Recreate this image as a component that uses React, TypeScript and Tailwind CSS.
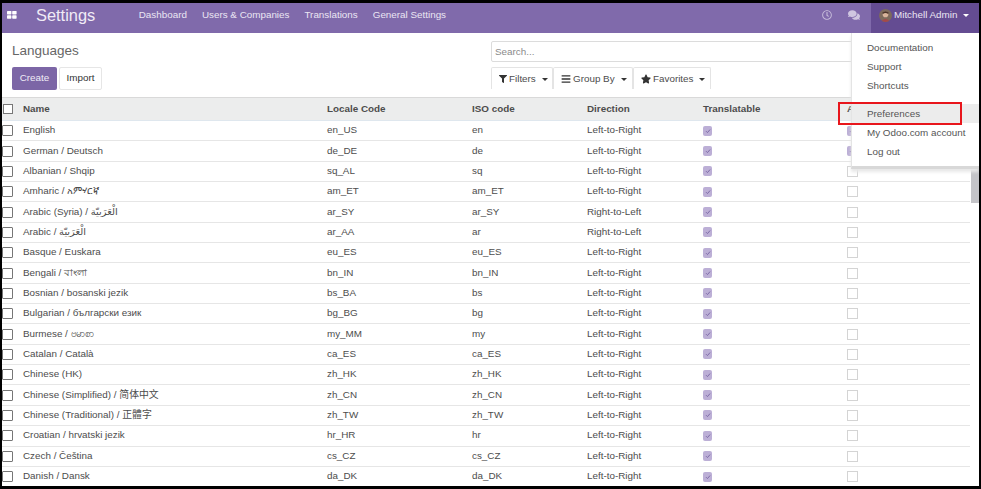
import { FaBars, FaComments, FaFilter, FaRegClock, FaStar } from "react-icons/fa";

const font = { fontFamily: '"Liberation Sans", "Noto Sans CJK SC", "DejaVu Sans", sans-serif' };

const rows: [string, string, string, string, boolean][] = [
  ["English", "en_US", "en", "Left-to-Right", true],
  ["German / Deutsch", "de_DE", "de", "Left-to-Right", true],
  ["Albanian / Shqip", "sq_AL", "sq", "Left-to-Right", false],
  ["Amharic / አምሃርኛ", "am_ET", "am_ET", "Left-to-Right", false],
  ["Arabic (Syria) / الْعَرَبيّة", "ar_SY", "ar_SY", "Right-to-Left", false],
  ["Arabic / الْعَرَبيّة", "ar_AA", "ar", "Right-to-Left", false],
  ["Basque / Euskara", "eu_ES", "eu_ES", "Left-to-Right", false],
  ["Bengali / বাংলা", "bn_IN", "bn_IN", "Left-to-Right", false],
  ["Bosnian / bosanski jezik", "bs_BA", "bs", "Left-to-Right", false],
  ["Bulgarian / български език", "bg_BG", "bg", "Left-to-Right", false],
  ["Burmese / ဗမာစာ", "my_MM", "my", "Left-to-Right", false],
  ["Catalan / Català", "ca_ES", "ca_ES", "Left-to-Right", false],
  ["Chinese (HK)", "zh_HK", "zh_HK", "Left-to-Right", false],
  ["Chinese (Simplified) / 简体中文", "zh_CN", "zh_CN", "Left-to-Right", false],
  ["Chinese (Traditional) / 正體字", "zh_TW", "zh_TW", "Left-to-Right", false],
  ["Croatian / hrvatski jezik", "hr_HR", "hr", "Left-to-Right", false],
  ["Czech / Čeština", "cs_CZ", "cs_CZ", "Left-to-Right", false],
  ["Danish / Dansk", "da_DK", "da_DK", "Left-to-Right", false],
];

const gridCols = "grid grid-cols-[21px_304px_145px_115px_116px_144px_1fr] items-center";

function Caret({ color = "border-t-[#4c4c4c]" }: { color?: string }) {
  return <span className={`inline-block w-0 h-0 border-x-[3px] border-x-transparent border-t-[3px] ${color}`} />;
}

function Check({ on }: { on: boolean }) {
  if (on) {
    return (
      <span className="w-[9px] h-[10px] rounded-[2px] bg-[#bcafd6] flex items-center justify-center">
        <svg viewBox="0 0 10 10" className="w-[8px] h-[8px]">
          <path d="M2.5 5.2 L4.3 7 L7.6 3.2" fill="none" stroke="#7c6aa6" strokeWidth="1.2" />
        </svg>
      </span>
    );
  }
  return <span className="w-[11px] h-[11px] border border-[#d4d4d4] bg-white" />;
}

function Facet({ icon, label, width }: { icon: React.ReactNode; label: string; width: string }) {
  return (
    <div className={`h-[22px] flex items-center pl-[7px] pt-[1px] border border-b-0 border-[#e4e4e4] rounded-t-[2px] text-[#4c4c4c] ${width}`}>
      {icon}
      <span className="ml-[2px] mr-[6px]">{label}</span>
      <Caret color="border-t-[#333333]" />
    </div>
  );
}

export default function App() {
  return (
    <div style={font} className="w-[981px] h-[489px] bg-black pt-[3px] pl-[2px] pr-[2px] pb-[3px] overflow-hidden">
      <div className="relative w-full h-full bg-white overflow-hidden text-[9.85px] text-[#4c4c4c]">
        <header className="h-[30px] bg-[#806aab] flex items-center text-white">
          <div className="flex items-center h-full pb-[6px]">
            <svg viewBox="0 0 10 8" className="w-[10px] h-[8px] ml-[5px]" fill="#ffffff">
              <rect x="0" y="0" width="4.4" height="3.4" rx="0.6" />
              <rect x="5.2" y="0" width="4.4" height="3.4" rx="0.6" />
              <rect x="0" y="4.3" width="4.4" height="3.4" rx="0.6" />
              <rect x="5.2" y="4.3" width="4.4" height="3.4" rx="0.6" />
            </svg>
            <div className="ml-[19px] text-[16.4px] text-[#f0ecf6]">Settings</div>
            <nav className="ml-[43.5px] flex gap-[15px] text-[#ebe6f3]">
              <span>Dashboard</span>
              <span>Users &amp; Companies</span>
              <span>Translations</span>
              <span>General Settings</span>
            </nav>
          </div>
          <div className="ml-auto flex items-center h-full">
            <FaRegClock className="w-[10px] h-[10px] mb-[7px] text-[#c5bad9]" />
            <FaComments className="w-[12px] h-[12px] ml-[16px] mr-[11px] mb-[6px] text-[#cfc6e0]" />
            <div className="h-full w-[108px] bg-[#644c92] flex items-center pl-[8px] pb-[6px] text-[#ebe6f3]">
              <svg viewBox="0 0 12 12" className="w-[13px] h-[13px] shrink-0">
                <circle cx="6" cy="6" r="6" fill="#7d6a5c" />
                <circle cx="6" cy="5" r="2.6" fill="#d8b39a" />
                <path d="M3 3.5 Q6 0.5 9 3.5 L8.4 4.5 Q6 3 3.6 4.5 Z" fill="#4a352a" />
                <path d="M2.5 11 Q6 7.5 9.5 11 L6 12 Z" fill="#a5484a" />
              </svg>
              <span className="ml-[2px] whitespace-nowrap">Mitchell Admin</span>
              <span className="ml-[6px] flex"><Caret color="border-t-white" /></span>
            </div>
          </div>
        </header>

        <section className="h-[64px] flex">
          <div className="w-[489px] pl-[10px] pt-[9px]">
            <div className="text-[13.5px] leading-[17px] text-[#666666]">Languages</div>
            <div className="flex gap-[2px] mt-[8px]">
              <button className="h-[23px] w-[45px] rounded-[2px] bg-[#7c66a6] text-[#f0ecf6]">Create</button>
              <button className="h-[23px] w-[43px] rounded-[2px] border border-[#e6e6e6] bg-white text-[#333333]">Import</button>
            </div>
          </div>
          <div className="flex-1 pt-[8px]">
            <div className="h-[21px] pt-[1px] border border-[#dcdcdc] rounded-[2px] flex items-center pl-[3px] text-[#8a8a8a]">Search...</div>
            <div className="flex mt-[5px]">
              <Facet icon={<FaFilter className="w-[8px] h-[8px] text-[#333333]" />} label="Filters" width="w-[62px]" />
              <Facet icon={<FaBars className="w-[10px] h-[10px] text-[#333333]" />} label="Group By" width="w-[80px]" />
              <Facet icon={<FaStar className="w-[10px] h-[10px] text-[#333333]" />} label="Favorites" width="w-[78px]" />
            </div>
          </div>
        </section>

        <div className={`${gridCols} h-[24px] bg-[#eceded] border-t border-t-[#d9d9d9] border-b border-b-[#dfe7ee] font-bold text-[#4c4c4c]`}>
          <span className="pl-[1px] flex"><span className="w-[10px] h-[10px] border border-[#777777] bg-white" /></span>
          <span>Name</span>
          <span>Locale Code</span>
          <span>ISO code</span>
          <span>Direction</span>
          <span>Translatable</span>
          <span>Active</span>
        </div>

        <div className="w-[968px]">
          {rows.map((r) => (
            <div key={r[1]} className={`${gridCols} h-[20.35px] border-b border-[#e6e6e6]`}>
              <span className="flex"><span className="w-[11px] h-[11px] border border-[#767676] rounded-[1px] bg-white" /></span>
              <span className="whitespace-nowrap">{r[0]}</span>
              <span>{r[1]}</span>
              <span>{r[2]}</span>
              <span>{r[3]}</span>
              <span className="flex"><Check on /></span>
              <span className="flex"><Check on={r[4]} /></span>
            </div>
          ))}
        </div>

        <div className="absolute left-[969px] top-[162px] w-[8px] h-[38px] bg-[#c4c4c8]" />

        <div className="absolute left-[849px] top-[30px] w-[128px] h-[136px] bg-white border-l border-[#e4e4e4] border-b-[3px] border-b-[#d8d8d8] shadow-[0_3px_3px_#e8e8e8] text-[#555555]">
          <div className="pt-[5px] pl-[15px] flex flex-col leading-[19px]">
            <span>Documentation</span>
            <span>Support</span>
            <span>Shortcuts</span>
          </div>
          <div className="mt-[9px] h-[19px] -mr-[1px] bg-[#ececec] pl-[15px] leading-[19px]">Preferences</div>
          <div className="pl-[15px] flex flex-col leading-[19px]">
            <span className="whitespace-nowrap">My Odoo.com account</span>
            <span>Log out</span>
          </div>
        </div>

        <div className="absolute left-[836px] top-[99px] w-[124px] h-[23px] border-2 border-[#e8161c]" />
      </div>
    </div>
  );
}
